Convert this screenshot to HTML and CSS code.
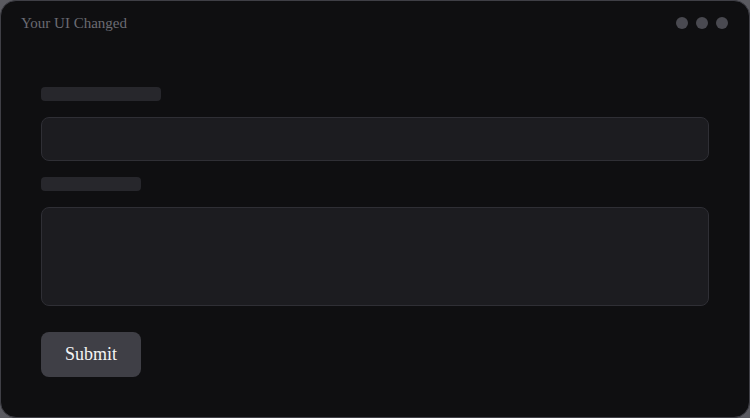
FILE: index.html
```html
<!DOCTYPE html>
<html>
<head>
<meta charset="utf-8">
<link rel="stylesheet" href="styles.css">
</head>
<body>
<div class="window">
  <div class="header">
    <span class="title">Your UI Changed</span>
    <div class="dots"><span class="dot"></span><span class="dot"></span><span class="dot"></span></div>
  </div>
  <form class="form">
    <div class="label label-long"></div>
    <div class="field field-input"></div>
    <div class="label label-short"></div>
    <div class="field field-area"></div>
    <button type="button" class="submit">Submit</button>
  </form>
</div>
</body>
</html>
```

FILE: styles.css
```css
html, body {
  margin: 0;
  padding: 0;
  background: #5a5a60;
}
.window {
  width: 750px;
  height: 418px;
  box-sizing: border-box;
  border: 1px solid #3f3f46;
  border-radius: 16px;
  background: #0f0f11;
  overflow: hidden;
}
.header {
  display: flex;
  justify-content: space-between;
  align-items: center;
  padding: 12px 20px 0 20px;
  height: 20px;
}
.title {
  font-family: "Liberation Serif", serif;
  font-size: 15px;
  line-height: 20px;
  color: #6b6b73;
}
.dots {
  display: flex;
  gap: 8px;
  margin-right: 1px;
}
.dot {
  width: 12px;
  height: 12px;
  border-radius: 50%;
  background: #4a4a51;
}
.form {
  display: flex;
  flex-direction: column;
  align-items: flex-start;
  padding: 54px 40px 0 40px;
  margin: 0;
}
.label {
  height: 14px;
  border-radius: 4px;
  background: #27272c;
  margin-bottom: 16px;
}
.label-long { width: 120px; }
.label-short { width: 100px; }
.field {
  width: 100%;
  box-sizing: border-box;
  background: #1c1c20;
  border: 1px solid #2f2f35;
  border-radius: 8px;
  margin-bottom: 16px;
}
.field-input { height: 44px; }
.field-area { height: 99px; margin-bottom: 26px; }
.submit {
  width: 100px;
  height: 45px;
  border: none;
  border-radius: 8px;
  background: #3f3f46;
  color: #f4f4f5;
  font-family: "Liberation Serif", serif;
  font-size: 18px;
  padding: 0;
  cursor: pointer;
}
```
